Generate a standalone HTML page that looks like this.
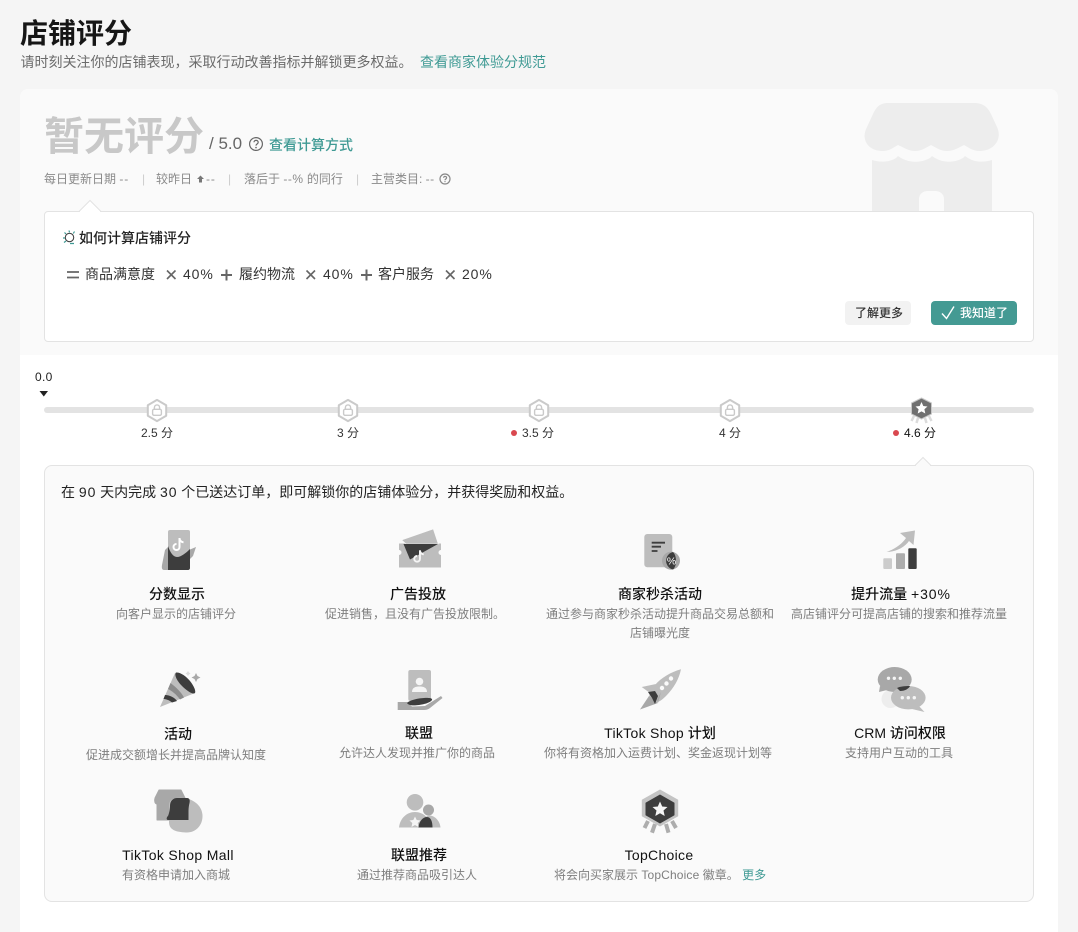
<!DOCTYPE html>
<html lang="zh">
<head>
<meta charset="utf-8">
<title>店铺评分</title>
<style>
html,body{margin:0;padding:0;background:#f5f5f5;}
body{width:1078px;height:932px;position:relative;overflow:hidden;font-family:"Liberation Sans","Noto Sans CJK SC",sans-serif;color:#222;}
div,a{position:absolute;}
.t{white-space:nowrap;line-height:20px;height:20px;}
.c{width:400px;text-align:center;white-space:nowrap;line-height:20px;height:20px;}
.h{font-size:14px;font-weight:500;color:#111;}
.d{font-size:12px;color:#7e7e7e;}
.s{font-size:12px;color:#8a8a8a;}
.f{font-size:14px;color:#333;}
.l{color:#3f9a94;}
.p{letter-spacing:.9px;}
.m{letter-spacing:.5px;}
.n{letter-spacing:.3px;}
svg{position:absolute;left:0;top:0;}
</style>
</head>
<body>
<div style="left:20px;top:89px;width:1038px;height:843px;background:#fff;border-radius:8px 8px 0 0;"></div>
<div style="left:20px;top:89px;width:1038px;height:266px;background:#fafafa;border-radius:8px 8px 0 0;"></div>

<div class="t" style="left:20px;top:19px;height:30px;line-height:30px;font-size:28px;font-weight:700;color:#161616;">店铺评分</div>
<div class="t" style="left:20.5px;top:52px;font-size:14px;color:#6b6b6b;">请时刻关注你的店铺表现，采取行动改善指标并解锁更多权益。</div>
<div class="t l" style="left:420px;top:52px;font-size:14px;">查看商家体验分规范</div>

<div class="t" style="left:44px;top:113px;height:48px;line-height:48px;font-size:40px;font-weight:700;color:#c8c8c8;">暂无评分</div>
<div class="t" style="left:209px;top:134px;font-size:17px;font-weight:500;color:#666;">/ 5.0</div>
<div class="t l" style="left:269px;top:135px;font-size:14px;font-weight:500;">查看计算方式</div>

<div class="t s" style="left:44px;top:169px;">每日更新日期 <span class="p">--</span></div>
<div class="t s" style="left:142px;top:169px;color:#ccc;">|</div>
<div class="t s" style="left:156px;top:169px;">较昨日</div>
<div class="t s" style="left:206px;top:169px;"><span class="p">--</span></div>
<div class="t s" style="left:228px;top:169px;color:#ccc;">|</div>
<div class="t s" style="left:244px;top:169px;">落后于 <span class="m">--%</span> 的同行</div>
<div class="t s" style="left:356px;top:169px;color:#ccc;">|</div>
<div class="t s" style="left:371px;top:169px;">主营类目: <span class="m">--</span></div>

<div style="left:44px;top:211px;width:988px;height:129px;background:#fff;border:1px solid #e3e3e3;border-radius:4px;"></div>
<div class="t" style="left:79px;top:228px;font-size:14px;font-weight:500;color:#222;">如何计算店铺评分</div>
<div class="t f" style="left:85px;top:264px;">商品满意度</div>
<div class="t f p" style="left:183px;top:264px;">40%</div>
<div class="t f" style="left:239px;top:264px;">履约物流</div>
<div class="t f p" style="left:323px;top:264px;">40%</div>
<div class="t f" style="left:378px;top:264px;">客户服务</div>
<div class="t f p" style="left:462px;top:264px;">20%</div>

<div style="left:845px;top:301px;width:66px;height:24px;background:#f2f2f2;border-radius:4px;"></div>
<div class="t" style="left:855px;top:303px;font-size:12px;font-weight:500;color:#333;">了解更多</div>
<div style="left:931px;top:301px;width:86px;height:24px;background:#449a93;border-radius:4px;"></div>
<div class="t" style="left:960px;top:303px;font-size:12px;font-weight:500;color:#fff;">我知道了</div>

<div class="t n" style="left:35px;top:367px;font-size:12px;color:#222;">0.0</div>
<div style="left:44px;top:407px;width:990px;height:6px;background:#e3e3e3;border-radius:3px;"></div>
<div class="c" style="left:-43px;top:423px;font-size:12px;color:#333;">2.5 分</div>
<div class="c" style="left:148px;top:423px;font-size:12px;color:#333;">3 分</div>
<div class="t" style="left:522px;top:423px;font-size:12px;color:#333;">3.5 分</div>
<div class="c" style="left:530px;top:423px;font-size:12px;color:#333;">4 分</div>
<div class="t" style="left:904px;top:423px;font-size:12px;color:#111;">4.6 分</div>
<div style="left:511px;top:430px;width:6px;height:6px;border-radius:50%;background:#d9484f;"></div>
<div style="left:893px;top:430px;width:6px;height:6px;border-radius:50%;background:#d9484f;"></div>

<div style="left:44px;top:465px;width:988px;height:435px;background:#fafafa;border:1px solid #e3e3e3;border-radius:8px;"></div>
<div class="t" style="left:61px;top:482px;font-size:14px;color:#222;">在 <span class="p">90</span> 天内完成 <span class="p">30</span> 个已送达订单，即可解锁你的店铺体验分，并获得奖励和权益。</div>

<svg width="1078" height="932" viewBox="0 0 1078 932" xmlns="http://www.w3.org/2000/svg">
<defs>
<g id="lk">
<path d="M0-10.6 9.2-5.3V5.3L0 10.6-9.2 5.3V-5.3Z" fill="#fff" stroke="#cacaca" stroke-width="2" stroke-linejoin="round"/>
<rect x="-4.4" y="-1.2" width="8.8" height="6" rx="1.4" fill="none" stroke="#cacaca" stroke-width="1.4"/>
<path d="M-2.6-1.200V-3A2.600 2.600 0 0 1 2.600-3V-1.200" fill="none" stroke="#cacaca" stroke-width="1.4"/>
</g>
<path id="nt" d="M1-6V3A3 3 0 1 1-2 0M1-6C1-3.5 3-1.8 5-1.8" fill="none" stroke-width="2"/>
</defs>

<!-- store -->
<path d="M888 103H974C984 103 988 108 991 114L997 127C1003 140 993 151 980 151 972 151 968 147 964 145 960 147 954 151 947 151 940 151 935 147 931 145 927 147 922 151 915 151 908 151 903 147 898 145 894 147 890 151 882 151 869 151 860 140 867 127L873 114C876 108 879 103 888 103Z" fill="#ededed"/>
<path d="M872 160C878 162 888 163 896 158L898 156 901 158C910 163 921 163 930 158L932 156 935 158C944 163 954 163 963 158L965 156 968 158C976 163 986 162 992 160V211H944V199C944 194 940 191 935 191H928C923 191 919 194 919 199V211H872Z" fill="#ededed"/>

<!-- help icons -->
<g fill="none" stroke="#666" stroke-width="1.2">
<circle cx="256" cy="144" r="6.4"/>
<path d="M254 142.3C254 139.6 258.2 139.8 258.2 142.3 258.2 144 256 144 256 145.6"/>
<circle cx="445" cy="179" r="5" stroke="#888"/>
<path d="M443.6 177.8C443.6 175.9 446.6 176 446.6 177.8 446.6 179 445 179 445 180.2" stroke="#888"/>
</g>
<circle cx="256" cy="147.6" r=".8" fill="#666"/>
<circle cx="445" cy="181.6" r=".6" fill="#888"/>
<path d="M200.5 175.500 204 179H202V182.500H199V179H197Z" fill="#777"/>

<!-- box arrow -->
<path d="M79 211.5 90 200.5 101 211.5" fill="#fff" stroke="#e3e3e3"/>
<path d="M80 212H100V211.5L90 201.5 80 211.5Z" fill="#fff"/>

<!-- bulb -->
<circle cx="69.500" cy="237.500" r="4.200" fill="none" stroke="#444" stroke-width="1.100"/>
<g fill="none" stroke="#3f9a94" stroke-width="1.200">
<path d="M70 243.500H74M63 238H65M64.500 232.500 66 234M69 230.500 69.500 232.300M74.500 231.500 73.300 233.500M64 242.500 66 241"/>
</g>

<!-- formula symbols -->
<g stroke="#666" stroke-width="1.6" fill="none">
<path d="M67 272H79M67 277.500H79" stroke-width="1.800"/>
<path d="M167 270.500 175.500 279M175.500 270.500 167 279M306.500 270.500 315 279M315 270.500 306.500 279M446 270.500 454.500 279M454.500 270.500 446 279"/>
<path d="M221 275H232M226.500 269.500V280.500M361 275H372M366.500 269.500V280.500" stroke-width="2"/>
</g>
<!-- check -->
<path d="M942 313.500 946.500 318.500 954 306.500" fill="none" stroke="#fff" stroke-width="1.4"/>

<!-- progress marker -->
<path d="M39.500 391H48L43.800 396.500Z" fill="#222"/>
<use href="#lk" x="157" y="410.500"/>
<use href="#lk" x="348" y="410.500"/>
<use href="#lk" x="539" y="410.500"/>
<use href="#lk" x="730" y="410.500"/>

<!-- 4.6 badge -->
<g stroke="#dcdcdc" stroke-width="2.500" fill="none"><path d="M914 416 911.500 421M918 418 916.500 423M925 418 926.500 423M929 416 931.500 421"/></g>
<path d="M921.500 398 931.500 403V414L921.500 419 911.500 414V403Z" fill="#707070" stroke="#c8c8c8" stroke-width="1" stroke-linejoin="round"/>
<path d="M921.500 402 923.300 406 927.500 406.500 924.400 409.300 925.300 413.500 921.500 411.400 917.700 413.500 918.600 409.300 915.500 406.500 919.700 406Z" fill="#fff"/>

<!-- panel tip -->
<path d="M915 465.500 923 457.500 931 465.500" fill="#fafafa" stroke="#e3e3e3"/>
<path d="M916 466.500H930V465.500L923 458.500 916 465.500Z" fill="#fafafa"/>

<!-- icon 1 -->
<rect x="168" y="530" width="22" height="40" rx="2" fill="#bdbdbd"/>
<path d="M165 550 168 547V570H164C162 570 161.500 568 162 565Z" fill="#a8a8a8"/>
<path d="M190 549.500 196 547 193 556 190 559Z" fill="#a8a8a8"/>
<path d="M168 546C170 552 173 557 177 557 181 557 186 553 190 549V568C190 569 189 570 188 570H168Z" fill="#3d3d3d"/>
<use href="#nt" stroke="#fff" transform="translate(178.500 544)"/>

<!-- icon 2 -->
<path d="M399 543.500H441V550A2.500 2.500 0 0 0 441 555V567.500H399V555A2.500 2.500 0 0 0 399 550Z" fill="#bdbdbd"/>
<path d="M401.700 540 433.300 529 438.300 544H406Z" fill="#bdbdbd" stroke="#fafafa" stroke-width=".6"/>
<path d="M403.500 544H438L410 559.500Z" fill="#3d3d3d"/>
<use href="#nt" stroke="#f5f5f5" transform="translate(419 556) scale(.95)"/>

<!-- icon 3 -->
<rect x="644.300" y="534" width="28" height="33.300" rx="3" fill="#bdbdbd"/>
<path d="M651.700 542.700H665M651.700 546.700H661M651.700 551H657.500" stroke="#3d3d3d" stroke-width="1.800"/>
<circle cx="671" cy="560.700" r="9" fill="#a8a8a8"/>
<path d="M673 552A9 9 0 0 0 673 569.500C677 566 677 556 673 552Z" fill="#3d3d3d"/>
<text x="671.500" y="564.500" font-size="10.500" text-anchor="middle" fill="#fff" font-family="Liberation Sans, sans-serif">%</text>

<!-- icon 4 -->
<rect x="883.300" y="558.300" width="8.700" height="10.700" rx="1" fill="#cccccc"/>
<rect x="896" y="553.300" width="9" height="15.700" rx="1" fill="#adadad"/>
<rect x="908.300" y="548.300" width="8.400" height="20.700" rx="1" fill="#3d3d3d"/>
<path d="M886.500 552C895 549 902 544 906 538L900 533 915 530.500 913.500 545 909 541C905 547 896 552 886.500 552Z" fill="#bdbdbd"/>

<!-- icon 5 -->
<path d="M175 673 160 707 195 693Z" fill="#bdbdbd"/>
<path d="M170.500 683C177 688 181 692 184 697.500L180 699.500C176 694 172 691 168 689Z" fill="#8b8b8b"/>
<path d="M165 695C170 695 175 698 177 701L172 702.500C169 700 166 699 163.500 699Z" fill="#3d3d3d"/>
<path d="M176 672.500C180 672 186 676 190 681 194 686 196 691 195 693 193 695 187 691 182 686 177 681 174 675 176 672.500Z" fill="#3d3d3d"/>
<path d="M196 673 197.500 676 200.500 677.500 197.500 679 196 682 194.500 679 191.500 677.500 194.500 676Z" fill="#a8a8a8"/>
<path d="M188 671 189 672.500 190.500 673.500 189 674.500 188 676 187 674.500 185.500 673.500 187 672.500Z" fill="#ddd"/>

<!-- icon 6 -->
<rect x="408.300" y="670" width="22.700" height="31" rx="2" fill="#bdbdbd"/>
<circle cx="419.500" cy="681.500" r="3.800" fill="#f5f5f5"/>
<path d="M412 692C412 687.500 415.500 686.500 419.500 686.500 423.500 686.500 427 687.500 427 692Z" fill="#f5f5f5"/>
<path d="M397.700 702H407L412 706.500 425 706 441 696 442.500 698 430 708C428 709.500 426 710 424 710H397.700Z" fill="#a8a8a8"/>
<path d="M407 703C411 698.500 430 696.500 432 699 433 701 427 704 419 705 412 706 408 705 407 703Z" fill="#3d3d3d"/>

<!-- icon 7 -->
<path d="M681 669.300C671 672 661 678 655 685 651 690 650 693 649 697L655 703C659 702 662 700 666 696 674 688 679 679 681 669.300Z" fill="#bdbdbd"/>
<path d="M641.700 687 656 684 650 693Z" fill="#bdbdbd"/>
<path d="M649 696 640 709.500 658 703Z" fill="#a8a8a8"/>
<path d="M658 703 661 692 657 700Z" fill="#a8a8a8"/>
<path d="M648 692 655 691 658 696 655 704 652 698Z" fill="#3d3d3d"/>
<circle cx="671" cy="678.500" r="2.200" fill="#fafafa"/>
<circle cx="666.500" cy="683.500" r="2.200" fill="#fafafa"/>
<circle cx="662" cy="688" r="2.200" fill="#fafafa"/>

<!-- icon 8 -->
<circle cx="890.500" cy="699" r="9" fill="#ededed"/>
<path d="M880 686 879 692 887 690Z" fill="#a8a8a8"/>
<ellipse cx="894.700" cy="679.500" rx="17" ry="12.500" fill="#a8a8a8"/>
<path d="M918 705 924.500 712 912 709Z" fill="#bdbdbd"/>
<ellipse cx="908.300" cy="697.700" rx="17.300" ry="11.700" fill="#bdbdbd"/>
<path d="M897 688C900 686.500 904 686 910 686 909 688.500 905 691 900 691Z" fill="#3d3d3d"/>
<g fill="#f5f5f5">
<circle cx="888.500" cy="678.300" r="1.700"/><circle cx="894.300" cy="678.300" r="1.700"/><circle cx="900.300" cy="678.300" r="1.700"/>
<circle cx="902.300" cy="697.700" r="1.700"/><circle cx="908.300" cy="697.700" r="1.700"/><circle cx="914.300" cy="697.700" r="1.700"/>
</g>

<!-- icon 9 -->
<path d="M159 790H181L185 798C185.500 801 184 804 182 804V820H157V804C155 804 154 801 155 798Z" fill="#a8a8a8" stroke="#a8a8a8" stroke-linejoin="round"/>
<path d="M176 798C190 796 202 804 202.500 815 203 825 196 833 186 832.500 176 832 169 830 169 822V805C169 801 172 798.500 176 798Z" fill="#bdbdbd"/>
<path d="M177 798H187C190 798 190 801 189.500 803 189 805 188.500 808 188.500 811V820H168C166 820 166.500 817 168 816 169 814 170 809 170 806 170 801 173 798 177 798Z" fill="#3d3d3d"/>

<!-- icon 10 -->
<circle cx="415" cy="802.300" r="8.300" fill="#bdbdbd"/>
<circle cx="428.500" cy="810" r="5.500" fill="#a8a8a8"/>
<path d="M399 827.500C400 818 407 812 415 812 423 812 430 818 432 827.500Z" fill="#bdbdbd"/>
<path d="M430 815.500C435 816 440 821 440.500 827.500H432C431 822 429 818 426 816Z" fill="#bdbdbd"/>
<path d="M418.500 827.500C419 821 423 817 427 817 431 817 432.500 822 432.500 827.500Z" fill="#3d3d3d"/>
<path d="M415 816.500 416.700 820 420.500 820.500 417.700 823 418.500 827 415 825 411.500 827 412.300 823 409.500 820.500 413.300 820Z" fill="#f5f5f5"/>

<!-- icon 11 -->
<g stroke="#adadad" stroke-width="4" fill="none"><path d="M648 821 644.500 828M655 824 652 832.700M666 824 668.500 832.700M672 821 676 828"/></g>
<path d="M660 790 677.700 800V816L660 826 642.300 816V800Z" fill="#c4c4c4" stroke="#c4c4c4" stroke-linejoin="round"/>
<path d="M660 795 674 803V815L660 823 646 815V803Z" fill="#3d3d3d" stroke="#3d3d3d" stroke-linejoin="round"/>
<path d="M660 801.500 662.200 806.500 667.500 807 663.500 810.500 664.700 816 660 813.200 655.300 816 656.500 810.500 652.500 807 657.800 806.500Z" fill="#f5f5f5"/>
</svg>

<!-- row 1 -->
<div class="c h" style="left:-23px;top:584px;">分数显示</div>
<div class="c d" style="left:-24px;top:604px;">向客户显示的店铺评分</div>
<div class="c h" style="left:218px;top:584px;">广告投放</div>
<div class="c d" style="left:215px;top:604px;">促进销售，且没有广告投放限制。</div>
<div class="c h" style="left:460px;top:584px;">商家秒杀活动</div>
<div class="c d" style="left:460px;top:604px;">通过参与商家秒杀活动提升商品交易总额和</div>
<div class="c d" style="left:460px;top:623px;">店铺曝光度</div>
<div class="c h" style="left:701px;top:584px;">提升流量 <span class="p">+30%</span></div>
<div class="c d" style="left:699px;top:604px;">高店铺评分可提高店铺的搜索和推荐流量</div>

<!-- row 2 -->
<div class="c h" style="left:-22px;top:724px;">活动</div>
<div class="c d" style="left:-24px;top:745px;">促进成交额增长并提高品牌认知度</div>
<div class="c h" style="left:219px;top:723px;">联盟</div>
<div class="c d" style="left:217px;top:743px;">允许达人发现并推广你的商品</div>
<div class="c h" style="left:460px;top:723px;"><span class="n">TikTok Shop</span> 计划</div>
<div class="c d" style="left:458px;top:743px;">你将有资格加入运费计划、奖金返现计划等</div>
<div class="c h" style="left:700px;top:723px;">CRM 访问权限</div>
<div class="c d" style="left:699px;top:743px;">支持用户互动的工具</div>

<!-- row 3 -->
<div class="c h" style="left:-22px;top:845px;letter-spacing:.35px;">TikTok Shop Mall</div>
<div class="c d" style="left:-24px;top:865px;">有资格申请加入商城</div>
<div class="c h" style="left:219px;top:845px;">联盟推荐</div>
<div class="c d" style="left:217px;top:865px;">通过推荐商品吸引达人</div>
<div class="c h n" style="left:459px;top:845px;">TopChoice</div>
<div class="t d" style="left:554px;top:865px;">将会向买家展示 <span style="letter-spacing:.15px">TopChoice</span> 徽章。 <span class="l">更多</span></div>
</body>
</html>
